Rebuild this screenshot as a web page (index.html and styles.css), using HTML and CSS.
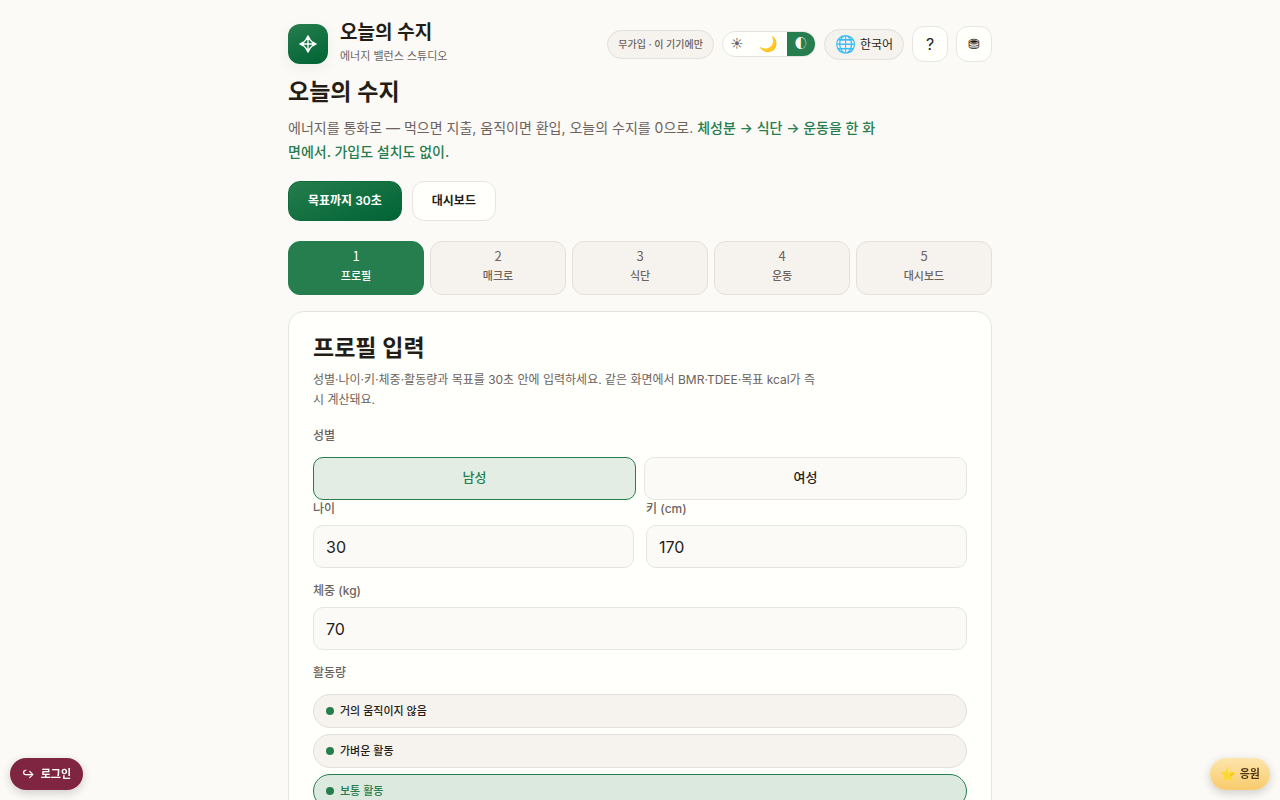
FILE: index.html
```html
<!DOCTYPE html>
<html lang="ko">
<head>
    <meta charset="UTF-8">
    <meta name="viewport" content="width=device-width, initial-scale=1">
    <title>오늘의 수지</title>
    <link rel="stylesheet" href="styles.css">
</head>
<body>
    <div class="container">
        <header class="topbar">
            <div class="brand">
                <div class="logo">
                    <svg viewBox="0 0 24 24" width="20" height="20" fill="none" stroke="currentColor" stroke-width="1.6" stroke-linejoin="round" aria-hidden="true">
                        <path d="M12 4v16M4 12h16M12 4l7 8-7 8-7-8z"/>
                        <path d="M12 1l3 5H9zM12 23l3-5H9zM1 12l5-3v6zM23 12l-5-3v6z" fill="currentColor" stroke="none"/>
                    </svg>
                </div>
                <div>
                    <div class="brand-name">오늘의 수지</div>
                    <div class="brand-sub">에너지 밸런스 스튜디오</div>
                </div>
            </div>
            <div class="tools">
                <span class="badge">무가입 · 이 기기에만</span>
                <div class="theme">
                    <button type="button" aria-label="밝게">☀</button>
                    <button type="button" class="moon" aria-label="어둡게">🌙</button>
                    <button type="button" class="active" aria-label="자동">◐</button>
                </div>
                <button type="button" class="lang"><span class="globe">🌐</span>한국어</button>
                <button type="button" class="icon-btn help">?</button>
                <button type="button" class="icon-btn" aria-label="데이터">⛃</button>
            </div>
        </header>

        <section class="hero">
            <h1>오늘의 수지</h1>
            <p>에너지를 통화로 — 먹으면 지출, 움직이면 환입, 오늘의 수지를 0으로. <strong>체성분 → 식단 → 운동을 한 화면에서. 가입도 설치도 없이.</strong></p>
            <div class="actions">
                <button type="button" class="btn primary">목표까지 30초</button>
                <button type="button" class="btn">대시보드</button>
            </div>
        </section>

        <nav class="steps">
            <button type="button" class="step active"><span class="num">1</span>프로필</button>
            <button type="button" class="step"><span class="num">2</span>매크로</button>
            <button type="button" class="step"><span class="num">3</span>식단</button>
            <button type="button" class="step"><span class="num">4</span>운동</button>
            <button type="button" class="step"><span class="num">5</span>대시보드</button>
        </nav>

        <main class="card">
            <h2>프로필 입력</h2>
            <p class="desc">성별·나이·키·체중·활동량과 목표를 30초 안에 입력하세요. 같은 화면에서 BMR·TDEE·목표 kcal가 즉시 계산돼요.</p>

            <div class="label" id="gender-label">성별</div>
            <div class="gender" role="group" aria-labelledby="gender-label">
                <button type="button" class="active" aria-pressed="true">남성</button>
                <button type="button" aria-pressed="false">여성</button>
            </div>

            <div class="row">
                <div class="field">
                    <label for="age">나이</label>
                    <input type="text" inputmode="numeric" id="age" value="30">
                </div>
                <div class="field">
                    <label for="height">키 (cm)</label>
                    <input type="text" inputmode="numeric" id="height" value="170">
                </div>
            </div>
            <div class="field">
                <label for="weight">체중 (kg)</label>
                <input type="text" inputmode="decimal" id="weight" value="70">
            </div>

            <div class="label" id="activity-label">활동량</div>
            <div class="activity" role="group" aria-labelledby="activity-label">
                <button type="button" aria-pressed="false">거의 움직이지 않음</button>
                <button type="button" aria-pressed="false">가벼운 활동</button>
                <button type="button" class="active" aria-pressed="true">보통 활동</button>
            </div>
        </main>
    </div>

    <button type="button" class="float login"><span>↪</span>로그인</button>
    <button type="button" class="float cheer"><span class="star">⭐</span>응원</button>
</body>
</html>
```
FILE: styles.css
```css
:root {
    --bg: #fbfaf7;
    --surface: #fffffc;
    --soft: #f6f3ef;
    --line: #e7e5e2;
    --text: #241d16;
    --muted: #6d635c;
    --green: #267d4d;
}
* {
    box-sizing: border-box;
}
body {
    margin: 0;
    background: var(--bg);
    color: var(--text);
    font-family: Inter, "Noto Sans CJK KR", sans-serif;
    font-size: 14px;
    line-height: 24px;
}
button, input {
    font: inherit;
    color: inherit;
}
button {
    cursor: pointer;
    padding: 0;
}
h1, h2, p {
    margin: 0;
}
.container {
    max-width: 736px;
    margin: 0 auto;
    padding: 20px 16px;
}
.topbar, .brand, .tools {
    display: flex;
    align-items: center;
}
.topbar {
    justify-content: space-between;
    height: 48px;
}
.brand {
    gap: 12px;
}
.logo {
    display: flex;
    align-items: center;
    justify-content: center;
    width: 40px;
    height: 40px;
    border-radius: 12px;
    color: #fff;
    background: linear-gradient(160deg, #267d4d, #006335);
    box-shadow: 0 4px 14px rgba(36, 29, 22, 0.06);
}
.brand-name {
    font-size: 19px;
    font-weight: 600;
    line-height: 24px;
}
.brand-sub {
    font-size: 11px;
    line-height: 22px;
    color: var(--muted);
}
.tools {
    gap: 8px;
}
.badge {
    padding: 4px 10px;
    border: 1px solid #e3dfda;
    border-radius: 20px;
    background: var(--soft);
    color: var(--muted);
    font-size: 10px;
    font-weight: 500;
    line-height: 19px;
}
.theme {
    display: flex;
    overflow: hidden;
    border: 1px solid var(--line);
    border-radius: 13px;
    background: var(--surface);
}
.theme button {
    border: 0;
    width: 28px;
    background: none;
    color: var(--muted);
    font-size: 12px;
    line-height: 24px;
}
.theme .moon {
    width: 36px;
    font-size: 15px;
}
.theme button.active {
    background: var(--green);
    color: #fff;
}
.lang {
    display: flex;
    align-items: center;
    gap: 4px;
    padding: 0 10px;
    border: 1px solid #e3dfda;
    border-radius: 16px;
    background: var(--soft);
    font-size: 12px;
    line-height: 29px;
}
.globe {
    font-size: 17px;
    opacity: 0.8;
}
.icon-btn {
    width: 36px;
    height: 36px;
    border: 1px solid var(--line);
    border-radius: 12px;
    background: var(--surface);
    font-size: 14px;
}
.help {
    font-size: 16px;
}
.hero {
    padding-top: 8px;
}
h1, h2 {
    font-size: 23px;
    font-weight: 600;
    line-height: 32px;
}
.hero p {
    max-width: 596px;
    margin-top: 8px;
    color: var(--muted);
}
.hero strong {
    color: var(--green);
    font-weight: 500;
}
.actions {
    display: flex;
    gap: 10px;
    margin-top: 17px;
}
.btn {
    height: 40px;
    padding: 0 19px;
    border: 1px solid var(--line);
    border-radius: 12px;
    background: var(--surface);
    font-size: 12px;
    font-weight: 600;
}
.btn.primary {
    border-color: #0f6a3b;
    background: linear-gradient(160deg, #267d4d, #006335);
    color: #fff;
}
.steps {
    display: grid;
    grid-template-columns: repeat(5, 1fr);
    gap: 6px;
    margin-top: 20px;
}
.step {
    height: 54px;
    padding-bottom: 4px;
    border: 1px solid #e3dfda;
    border-radius: 12px;
    background: var(--soft);
    color: var(--muted);
    font-size: 11px;
    font-weight: 500;
    line-height: 20px;
}
.step .num {
    display: block;
    font-family: "Noto Sans CJK KR", sans-serif;
    font-size: 13px;
    font-weight: 400;
}
.step.active {
    border-color: var(--green);
    background: var(--green);
    color: #fff;
}
.card {
    margin-top: 16px;
    padding: 20px 24px;
    border: 1px solid var(--line);
    border-radius: 16px;
    background: var(--surface);
}
.desc {
    max-width: 510px;
    margin: 6px 0 17px;
    color: var(--muted);
    font-size: 12px;
    line-height: 20px;
}
.label, .field label {
    display: block;
    color: var(--muted);
    font-size: 12px;
    font-weight: 500;
    line-height: 17px;
}
.label {
    margin-bottom: 13px;
}
.gender {
    display: grid;
    grid-template-columns: 1fr 1fr;
    gap: 8px;
}
.gender button {
    height: 43px;
    padding-bottom: 4px;
    border: 1px solid var(--line);
    border-radius: 10px;
    background: var(--bg);
    font-size: 13px;
    font-weight: 500;
}
.gender button.active {
    border-color: var(--green);
    background: #e4ede4;
    color: var(--green);
}
.row {
    display: grid;
    grid-template-columns: 1fr 1fr;
    gap: 12px;
}
.field {
    margin-bottom: 14px;
}
.field input {
    display: block;
    width: 100%;
    height: 43px;
    margin-top: 8px;
    padding: 0 12px;
    border: 1px solid var(--line);
    border-radius: 10px;
    background: var(--bg);
    font-size: 16px;
}
.activity {
    display: grid;
    gap: 6px;
}
.activity button {
    display: flex;
    align-items: center;
    gap: 6px;
    height: 34px;
    padding: 0 12px;
    border: 1px solid #e3dfda;
    border-radius: 17px;
    background: var(--soft);
    font-size: 11px;
    font-weight: 500;
}
.activity button::before {
    content: "";
    width: 8px;
    height: 8px;
    border-radius: 50%;
    background: var(--green);
}
.activity button.active {
    border-color: var(--green);
    background: #dce9df;
    color: var(--green);
}
.float {
    position: fixed;
    bottom: 10px;
    display: flex;
    align-items: center;
    gap: 6px;
    height: 32px;
    border: 0;
    border-radius: 16px;
    box-shadow: 0 3px 10px rgba(36, 29, 22, 0.2);
    font-size: 11px;
    font-weight: 600;
}
.login {
    left: 10px;
    padding: 0 12px;
    background: #7f2541;
    color: #fff;
}
.cheer {
    right: 10px;
    padding: 0 10px;
    background: linear-gradient(#fde5ad, #f8cb6c);
    color: #4d3512;
    gap: 4px;
}
.star {
    font-size: 13px;
}
```
